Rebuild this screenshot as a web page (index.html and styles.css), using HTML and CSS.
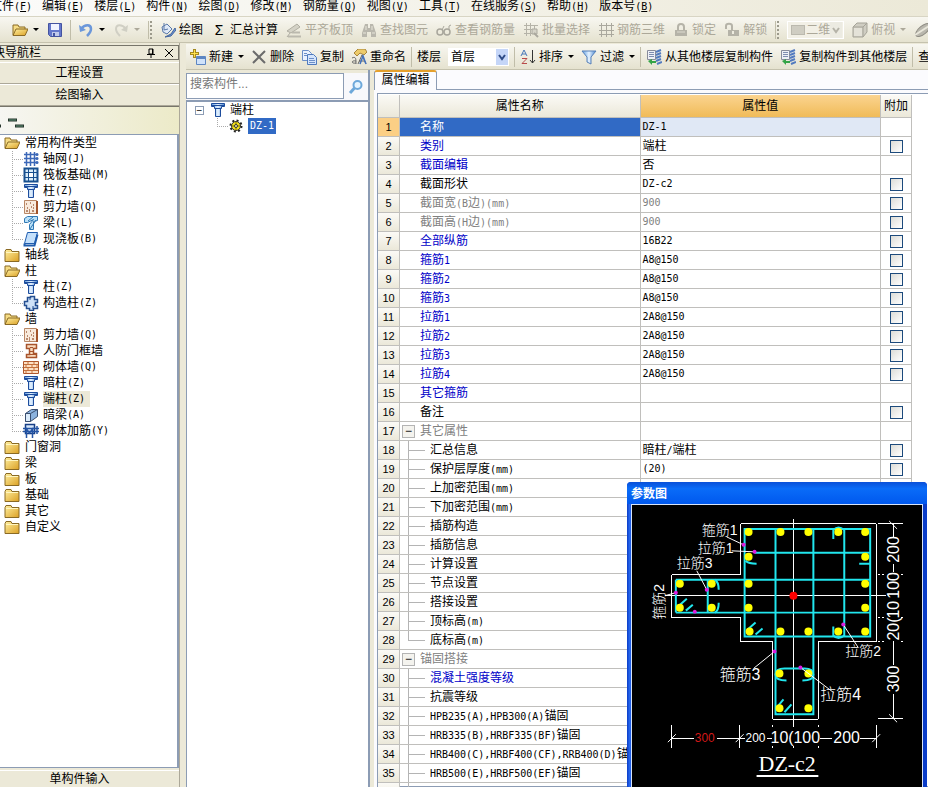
FILE: index.html
```html
<!doctype html>
<html lang="zh-CN">
  <head>
    <meta charset="utf-8" />
    <title>属性编辑</title>
    <link rel="stylesheet" href="styles.css">
  </head>
  <body>
    <svg class="sprite" aria-hidden="true">
      <defs>
        <linearGradient id="gold" x1="0" y1="0" x2="1" y2="1"><stop offset="0" stop-color="#fff0a0"/><stop offset="1" stop-color="#dba024"/></linearGradient>
        <linearGradient id="blue" x1="0" y1="0" x2="1" y2="0"><stop offset="0" stop-color="#5c9be0"/><stop offset=".5" stop-color="#e6f3ff"/><stop offset="1" stop-color="#4382d0"/></linearGradient>
      </defs>
      <symbol id="folder" viewBox="0 0 16 16"><path d="M1 4.500l1-2h5l1 2h7v10H1z" fill="url(#gold)" stroke="#8a6a24"/><path d="M2 5.500h12" stroke="#fff6c0"/></symbol>
      <symbol id="folder-open" viewBox="0 0 16 16"><path d="M1 13V3h5l1 2h6v3" fill="#f6dc84" stroke="#8a6a24"/><path d="M1 13.500L4 7h12l-3 6.500z" fill="url(#gold)" stroke="#8a6a24"/></symbol>
      <symbol id="grid" viewBox="0 0 16 16"><path d="M3.500 1v14M7.500 1v14M11.500 1v14M1 3.500h14M1 7.500h14M1 11.500h14" stroke="#3c68b8" fill="none" stroke-width="1.500"/><circle cx="14" cy="3.500" r="1.500" fill="#3c68b8"/><circle cx="14" cy="7.500" r="1.500" fill="#3c68b8"/><circle cx="14" cy="11.500" r="1.500" fill="#3c68b8"/></symbol>
      <symbol id="raft" viewBox="0 0 16 16"><path d="M1.500 1.500h13v13h-13z" fill="#d8ecfa" stroke="#174f8e" stroke-width="2"/><path d="M5.500 2v12M10.500 2v12M2 5.500h12M2 10.500h12" stroke="#174f8e"/><path d="M6 6h4v4H6z" fill="#fff"/></symbol>
      <symbol id="column" viewBox="0 0 16 16"><path d="M1.500 1.500h13v3h-3v2h-1v8h-5v-8h-1v-2h-3z" fill="url(#blue)" stroke="#1d4c9c"/><path d="M2 3.500h12M5 6.500h6" stroke="#1d4c9c"/></symbol>
      <symbol id="wall" viewBox="0 0 16 16"><path d="M1.500 1.500h12v13h-12z" fill="#f8eadc" stroke="#b98765"/><path d="M14 2v13" stroke="#a3542a" stroke-width="2"/><path d="M3 5h1m3-1h1m2 2h1M4 9h1m3-1h1M3 12h2m1-1h1m2 1h2m-1-3h1m-5 4h1" stroke="#a4694a" stroke-width="1.500"/></symbol>
      <symbol id="beam" viewBox="0 0 16 16"><path d="M1.500 3.500l3-2h10v4l-4 1v8h-4v-5l4-5-6 3h-3z" fill="#b9e0f8" stroke="#2f78b4"/><path d="M5 6l5-4M7 14l6-9" stroke="#2f78b4"/></symbol>
      <symbol id="slab" viewBox="0 0 16 16"><path d="M4.500 1.500h10l-3 11h-10z" fill="#c4e0fb" stroke="#1f5cae"/><path d="M1.500 12.500v2h10l3-11" fill="none" stroke="#1f5cae" stroke-width="2"/></symbol>
      <symbol id="tie-column" viewBox="0 0 16 16"><path d="M4.500 2.500h3v-1h4v3h3v3h-2v3h2v3h-4v2h-4v-2h-3v-3h-2v-4h3z" fill="#cfe2f8" stroke="#244f91" stroke-width="1.500"/><path d="M7 2v3m3 6v3" stroke="#244f91"/></symbol>
      <symbol id="door-wall" viewBox="0 0 16 16"><path d="M3.500 1.500h10v4h-3v5h3v4h-10v-3h3v-6h-3z" fill="#f9dcc0" stroke="#a8542c" stroke-width="1.500"/><path d="M7 4.500h3m-4 4h4m-3 3h6" stroke="#a8542c"/></symbol>
      <symbol id="brick" viewBox="0 0 16 16"><path d="M.5 2.500h15v12H.5z" fill="#fde0c4" stroke="#b0582c"/><path d="M1 5.500h14m-14 3h14m-14 3h14M5 3v2m6-2v2M3 6v2m6-2v2m5-2v2M5 9v2m6-2v2M3 12v2m6-2v2" stroke="#c4703c"/></symbol>
      <symbol id="hidden-beam" viewBox="0 0 16 16"><path d="M2.500 6.500l6-4h6v7l-7 5h-5z" fill="#8bb2de" stroke="#3a4f70"/><path d="M2.500 6.500h5v8h-5z" fill="#dcecfa" stroke="#3a4f70"/><path d="M7.500 6.500l7-4" stroke="#3a4f70"/></symbol>
      <symbol id="brick-rebar" viewBox="0 0 16 16"><path d="M2.500 1.500h9v9h-9z" fill="#d7e7fa" stroke="#173f86" stroke-width="1.500"/><path d="M0 5.500h16M0 8.500h16M3.500 15V6l3 4 3-4v9M14 3v8" stroke="#2454a4" fill="none" stroke-width="1.500"/></symbol>
      <symbol id="gear" viewBox="0 0 16 16"><circle cx="8" cy="8" r="5.500" fill="none" stroke="#222" stroke-width="2" stroke-dasharray="2 2.300"/><circle cx="8" cy="8" r="4.500" fill="#f2e01c" stroke="#333"/><path d="M8 4v8M4 8h8" stroke="#7c7200"/><circle cx="8" cy="8" r="1.500" fill="#fffbb0" stroke="#333"/></symbol>
      <symbol id="save" viewBox="0 0 16 16"><path d="M1.500 1.500h13v13h-11l-2-2z" fill="#6477cc" stroke="#4453a0"/><path d="M4 2h8v6H4z" fill="#f0f3ff"/><path d="M5 10h7v4H5z" fill="#c0c9ec"/><path d="M6 11h2v3H6z" fill="#4453a0"/></symbol>
      <symbol id="undo" viewBox="0 0 16 16"><path d="M3 7c4-5 10-5 10 0 0 3-2 5-4 7" fill="none" stroke="#6b97da" stroke-width="2.500"/><path d="M1 3l1 7 6-2z" fill="#6b97da"/></symbol>
      <symbol id="redo" viewBox="0 0 16 16"><path d="M13 7C9 2 3 2 3 7c0 3 2 5 4 7" fill="none" stroke="#d0cfc4" stroke-width="2"/><path d="M15 3l-1 7-6-2z" fill="#d0cfc4"/></symbol>
      <symbol id="draw" viewBox="0 0 16 16"><path d="M2 5l5-3 5 5-5 5-4-2z" fill="#dfe9f7" stroke="#5a78a8"/><path d="M4 1v7l4-1" fill="none" stroke="#5a78a8"/><path d="M15 6l-4 6-6 3 6-1 5-6z" fill="#6a95d8" stroke="#44649c"/></symbol>
      <symbol id="align" viewBox="0 0 16 16"><path d="M1 9l10-7 3 3-9 6z" fill="#d4d2c6" stroke="#b0aea2"/><path d="M6 9.500h8v2H6zm0 4h9v2H2v-2" fill="#bbb9ae"/><path d="M4 11l-3 4" stroke="#b0aea2"/></symbol>
      <symbol id="binoculars" viewBox="0 0 16 16"><path d="M4 2h3v4h2V2h3l3 9v4h-5v-5H6v5H1v-4z" fill="#b9b7ad"/><path d="M2 11h3m6 0h3M5 4v4m6-4v4" stroke="#e8e6da"/></symbol>
      <symbol id="glasses" viewBox="0 0 16 16"><circle cx="4" cy="10" r="3" fill="none" stroke="#a8a69c" stroke-width="1.500"/><circle cx="11" cy="10" r="3" fill="none" stroke="#a8a69c" stroke-width="1.500"/><path d="M7 10h1M13 8V4l2-1M6 8l2-4" stroke="#a8a69c" fill="none"/></symbol>
      <symbol id="batch" viewBox="0 0 16 16"><path d="M1 3.500h14M1 7.500h9M1 11.500h8M3.500 1v13M7.500 1v13M11.500 4v4" stroke="#b5b3a8"/><path d="M9 7h5v5H9z" fill="#d5d3c8" stroke="#aaa89e"/><path d="M11 11l4 4" stroke="#aaa89e" stroke-width="2"/></symbol>
      <symbol id="rebar3d" viewBox="0 0 16 16"><path d="M3.500 1v14M8.500 1v14M13.500 1v14M1 3.500h15M1 8.500h15M1 12.500h15" stroke="#aaa89e"/></symbol>
      <symbol id="lock" viewBox="0 0 16 16"><path d="M5 8V5c0-4 6-4 6 0v3" fill="none" stroke="#b5b3a8" stroke-width="2"/><path d="M2 8h12v6H2z" fill="#b5b3a8"/><path d="M4 10h8" stroke="#dddbd0"/></symbol>
      <symbol id="unlock" viewBox="0 0 16 16"><path d="M2 7V4c0-3 6-3 6 0v4" fill="none" stroke="#b5b3a8" stroke-width="2"/><path d="M4 8h11v6H4z" fill="#b5b3a8"/><path d="M9 9v3" stroke="#eeece0" stroke-width="2"/></symbol>
      <symbol id="cube" viewBox="0 0 16 16"><path d="M1 5l4-4h10v9l-4 5H1z" fill="#cfcdc2" stroke="#a5a398"/><path d="M1 5h10v10M11 5l4-4" fill="none" stroke="#a5a398"/><path d="M2 6h8v8H2z" fill="#e4e2d8"/></symbol>
      <symbol id="orbit" viewBox="0 0 16 16"><ellipse cx="9" cy="8" rx="9" ry="4" fill="#b9b7ad" stroke="#8f8d84" transform="rotate(-40 9 8)"/><path d="M1 13L15 4" stroke="#e8e6da" stroke-width="2"/></symbol>
      <symbol id="new" viewBox="0 0 16 16"><path d="M6.500 7.500h9v8h-9z" fill="#cfe2fa" stroke="#5d86c2"/><path d="M7 9h8" stroke="#5d86c2" stroke-width="2"/><path d="M4.500 0v9M0 4.500h9" stroke="#a48a20" stroke-width="3"/><path d="M4.500 1v7M1 4.500h7" stroke="#ffe14a"/></symbol>
      <symbol id="delete" viewBox="0 0 16 16"><path d="M2 2l12 12M14 2L2 14" stroke="#6b6b6b" stroke-width="2"/></symbol>
      <symbol id="copy" viewBox="0 0 16 16"><path d="M1.500 1.500h6l3 3v7h-9z" fill="#eaf2ff" stroke="#6c8fc8"/><path d="M6.500 5.500h6l3 3v7h-9z" fill="#d5e5fc" stroke="#4f7abd"/><path d="M8 9.500h5m-5 2h6m-6 2h6M3 4.500h3m-3 2h3" stroke="#6c8fc8"/></symbol>
      <symbol id="rename" viewBox="0 0 16 16"><path d="M3 4l4-4h7l2 3-3 3-4-2-3 3z" fill="#edcb6a" stroke="#a8853a"/><path d="M1 9c4-2 4 1 4 6M5 12c-5-1-5 3 0 2M7 15l4-9 4 9M8 12h6" fill="none" stroke="#666"/><path d="M9 15l3-8 3 8" fill="none" stroke="#4473be" stroke-width="1.500"/></symbol>
      <symbol id="sort" viewBox="0 0 16 16"><path d="M1 7l3-6 3 6M2 5h4" fill="none" stroke="#4878b8"/><path d="M2 9.500h5l-5 5h5" fill="none" stroke="#b84a4a"/><path d="M12.500 1v13M10 11l2.500 3 2.500-3" fill="none" stroke="#333"/></symbol>
      <symbol id="filter" viewBox="0 0 16 16"><path d="M1 2h14L10 8v7l-4-2V8z" fill="url(#blue)" stroke="#5680b8"/></symbol>
      <symbol id="floor-copy" viewBox="0 0 16 16"><path d="M1.500 1.500h8v9h-8z" fill="#eef0f6" stroke="#888c9c"/><path d="M3 3.500h5m-5 2h5m-5 2h5" stroke="#7f8db0"/><path d="M10 3l5-2M10 6l5-2M10 9l5-2M10 12l5-2M11 15l5-2" stroke="#527bc0" stroke-width="2"/><path d="M2 12l4-2v2h4v2H6v2z" fill="#35a447"/></symbol>
      <symbol id="search" viewBox="0 0 16 16"><circle cx="9.500" cy="6" r="4" fill="#e5f4ff" stroke="#6da8da" stroke-width="2"/><path d="M6.500 9L2 14" stroke="#6da8da" stroke-width="3"/></symbol>
      <symbol id="chevron" viewBox="0 0 12 16"><path d="M0 0h12v16H0z" fill="#c5d6f8"/><path d="M3 6l3 4 3-4" fill="none" stroke="#2c4a86" stroke-width="2"/></symbol>
      <symbol id="chevron-off" viewBox="0 0 12 16"><path d="M0 0h12v16H0z" fill="#ecebe2"/><path d="M3 6l3 4 3-4" fill="none" stroke="#b5b3a8" stroke-width="2"/></symbol>
    </svg>

    <nav class="menubar">
      <a href="#">文件<span class="en">(<u>F</u>)</span></a>
      <a href="#">编辑<span class="en">(<u>E</u>)</span></a>
      <a href="#">楼层<span class="en">(<u>L</u>)</span></a>
      <a href="#">构件<span class="en">(<u>N</u>)</span></a>
      <a href="#">绘图<span class="en">(<u>D</u>)</span></a>
      <a href="#">修改<span class="en">(<u>M</u>)</span></a>
      <a href="#">钢筋量<span class="en">(<u>Q</u>)</span></a>
      <a href="#">视图<span class="en">(<u>V</u>)</span></a>
      <a href="#">工具<span class="en">(<u>T</u>)</span></a>
      <a href="#">在线服务<span class="en">(<u>S</u>)</span></a>
      <a href="#">帮助<span class="en">(<u>H</u>)</span></a>
      <a href="#">版本号<span class="en">(<u>B</u>)</span></a>
    </nav>

    <div class="toolbar main-toolbar">
      <button aria-label="打开"><svg class="icon"><use href="#folder-open"/></svg><i class="caret"></i></button>
      <button aria-label="保存"><svg class="icon"><use href="#save"/></svg></button>
      <span class="sep"></span>
      <button aria-label="撤销"><svg class="icon"><use href="#undo"/></svg><i class="caret"></i></button>
      <button aria-label="恢复" disabled><svg class="icon"><use href="#redo"/></svg><i class="caret"></i></button>
      <span class="grip"></span>
      <button><svg class="icon"><use href="#draw"/></svg>绘图</button>
      <button><span class="sigma">Σ</span>汇总计算</button>
      <button disabled><svg class="icon"><use href="#align"/></svg>平齐板顶</button>
      <button disabled><svg class="icon"><use href="#binoculars"/></svg>查找图元</button>
      <button disabled><svg class="icon"><use href="#glasses"/></svg>查看钢筋量</button>
      <button disabled><svg class="icon"><use href="#batch"/></svg>批量选择</button>
      <button disabled><svg class="icon"><use href="#rebar3d"/></svg>钢筋三维</button>
      <button disabled><svg class="icon"><use href="#lock"/></svg>锁定</button>
      <button disabled><svg class="icon"><use href="#unlock"/></svg>解锁</button>
      <span class="grip"></span>
      <span class="combo off"><i class="swatch"></i><select aria-label="视图模式" disabled><option>二维</option></select><svg class="arrow"><use href="#chevron-off"/></svg></span>
      <button disabled><svg class="icon"><use href="#cube"/></svg>俯视<i class="caret"></i></button>
      <button aria-label="动态观察" disabled><svg class="icon"><use href="#orbit"/></svg></button>
    </div>

    <div class="workspace">
      <aside class="sidebar">
        <div class="side-title"><span class="side-name">模块导航栏</span>
          <button aria-label="固定"><svg class="pin" viewBox="0 0 10 10"><path d="M3 1h4v5H3zM1 6.500h8M5 7v3M6.500 1v5" fill="none" stroke="#000"/></svg></button>
          <button aria-label="关闭"><svg class="pin" viewBox="0 0 10 10"><path d="M1 1l8 8M9 1L1 9" stroke="#000"/></svg></button>
        </div>
        <button class="side-button">工程设置</button>
        <button class="side-button">绘图输入</button>
        <div class="side-tools"><svg class="dashes" viewBox="0 0 24 12"><path d="M8 3h9M15 9h9M0 9h1" stroke="#26352c" stroke-width="3"/><path d="M9 3h7M16 9h7" stroke="#5e9479"/></svg></div>
        <ul class="tree">
          <li><svg class="icon"><use href="#folder-open"/></svg><span>常用构件类型</span>
            <ul>
              <li><svg class="icon"><use href="#grid"/></svg><span>轴网<span class="en">(J)</span></span></li>
              <li><svg class="icon"><use href="#raft"/></svg><span>筏板基础<span class="en">(M)</span></span></li>
              <li><svg class="icon"><use href="#column"/></svg><span>柱<span class="en">(Z)</span></span></li>
              <li><svg class="icon"><use href="#wall"/></svg><span>剪力墙<span class="en">(Q)</span></span></li>
              <li><svg class="icon"><use href="#beam"/></svg><span>梁<span class="en">(L)</span></span></li>
              <li><svg class="icon"><use href="#slab"/></svg><span>现浇板<span class="en">(B)</span></span></li>
            </ul>
          </li>
          <li><svg class="icon"><use href="#folder"/></svg><span>轴线</span></li>
          <li><svg class="icon"><use href="#folder-open"/></svg><span>柱</span>
            <ul>
              <li><svg class="icon"><use href="#column"/></svg><span>柱<span class="en">(Z)</span></span></li>
              <li><svg class="icon"><use href="#tie-column"/></svg><span>构造柱<span class="en">(Z)</span></span></li>
            </ul>
          </li>
          <li><svg class="icon"><use href="#folder-open"/></svg><span>墙</span>
            <ul>
              <li><svg class="icon"><use href="#wall"/></svg><span>剪力墙<span class="en">(Q)</span></span></li>
              <li><svg class="icon"><use href="#door-wall"/></svg><span>人防门框墙</span></li>
              <li><svg class="icon"><use href="#brick"/></svg><span>砌体墙<span class="en">(Q)</span></span></li>
              <li><svg class="icon"><use href="#column"/></svg><span>暗柱<span class="en">(Z)</span></span></li>
              <li><svg class="icon"><use href="#column"/></svg><span class="current">端柱<span class="en">(Z)</span></span></li>
              <li><svg class="icon"><use href="#hidden-beam"/></svg><span>暗梁<span class="en">(A)</span></span></li>
              <li><svg class="icon"><use href="#brick-rebar"/></svg><span>砌体加筋<span class="en">(Y)</span></span></li>
            </ul>
          </li>
          <li><svg class="icon"><use href="#folder"/></svg><span>门窗洞</span></li>
          <li><svg class="icon"><use href="#folder"/></svg><span>梁</span></li>
          <li><svg class="icon"><use href="#folder"/></svg><span>板</span></li>
          <li><svg class="icon"><use href="#folder"/></svg><span>基础</span></li>
          <li><svg class="icon"><use href="#folder"/></svg><span>其它</span></li>
          <li><svg class="icon"><use href="#folder"/></svg><span>自定义</span></li>
        </ul>
        <button class="side-button last">单构件输入</button>
      </aside>

      <main class="editor">
        <div class="toolbar edit-toolbar">
          <button><svg class="icon"><use href="#new"/></svg>新建<i class="caret"></i></button>
          <button><svg class="icon"><use href="#delete"/></svg>删除</button>
          <button><svg class="icon"><use href="#copy"/></svg>复制</button>
          <button><svg class="icon"><use href="#rename"/></svg>重命名</button>
          <span class="sep"></span>
          <label for="floor">楼层</label>
          <span class="combo"><select id="floor"><option>首层</option></select><svg class="arrow"><use href="#chevron"/></svg></span>
          <span class="sep"></span>
          <button><svg class="icon"><use href="#sort"/></svg>排序<i class="caret"></i></button>
          <button><svg class="icon"><use href="#filter"/></svg>过滤<i class="caret"></i></button>
          <span class="sep"></span>
          <button><svg class="icon"><use href="#floor-copy"/></svg>从其他楼层复制构件</button>
          <button><svg class="icon"><use href="#floor-copy"/></svg>复制构件到其他楼层</button>
          <span class="sep"></span>
          <button>查找</button>
        </div>

        <div class="panes">
          <section class="parts">
            <div class="search">
              <input type="text" placeholder="搜索构件..." aria-label="搜索构件">
              <button aria-label="搜索"><svg class="icon"><use href="#search"/></svg></button>
            </div>
            <ul class="part-list">
              <li><button class="toggle" aria-label="折叠">−</button><svg class="icon"><use href="#column"/></svg><span>端柱</span></li>
              <li class="leaf"><svg class="icon"><use href="#gear"/></svg><span class="selected en">DZ-1</span></li>
            </ul>
          </section>

          <section class="props">
            <div class="tabs"><button class="tab">属性编辑</button></div>
            <div class="sheet">
              <table>
                <colgroup><col class="col-num"><col><col><col class="col-extra"></colgroup>
                <thead>
                  <tr><th></th><th>属性名称</th><th class="active">属性值</th><th>附加</th></tr>
                </thead>
                <tbody>
                  <tr class="picked"><th>1</th><td>名称</td><td class="en">DZ-1</td><td></td></tr>
                  <tr class="key"><th>2</th><td>类别</td><td>端柱</td><td><input type="checkbox" aria-label="类别"></td></tr>
                  <tr class="key"><th>3</th><td>截面编辑</td><td>否</td><td></td></tr>
                  <tr><th>4</th><td>截面形状</td><td class="en">DZ-c2</td><td><input type="checkbox" aria-label="截面形状"></td></tr>
                  <tr class="dim"><th>5</th><td>截面宽<span class="en">(B</span>边<span class="en">)(mm)</span></td><td class="en">900</td><td><input type="checkbox" aria-label="截面宽"></td></tr>
                  <tr class="dim"><th>6</th><td>截面高<span class="en">(H</span>边<span class="en">)(mm)</span></td><td class="en">900</td><td><input type="checkbox" aria-label="截面高"></td></tr>
                  <tr class="key"><th>7</th><td>全部纵筋</td><td class="en">16B22</td><td><input type="checkbox" aria-label="全部纵筋"></td></tr>
                  <tr class="key"><th>8</th><td>箍筋<span class="en">1</span></td><td class="en">A8@150</td><td><input type="checkbox" aria-label="箍筋1"></td></tr>
                  <tr class="key"><th>9</th><td>箍筋<span class="en">2</span></td><td class="en">A8@150</td><td><input type="checkbox" aria-label="箍筋2"></td></tr>
                  <tr class="key"><th>10</th><td>箍筋<span class="en">3</span></td><td class="en">A8@150</td><td><input type="checkbox" aria-label="箍筋3"></td></tr>
                  <tr class="key"><th>11</th><td>拉筋<span class="en">1</span></td><td class="en">2A8@150</td><td><input type="checkbox" aria-label="拉筋1"></td></tr>
                  <tr class="key"><th>12</th><td>拉筋<span class="en">2</span></td><td class="en">2A8@150</td><td><input type="checkbox" aria-label="拉筋2"></td></tr>
                  <tr class="key"><th>13</th><td>拉筋<span class="en">3</span></td><td class="en">2A8@150</td><td><input type="checkbox" aria-label="拉筋3"></td></tr>
                  <tr class="key"><th>14</th><td>拉筋<span class="en">4</span></td><td class="en">2A8@150</td><td><input type="checkbox" aria-label="拉筋4"></td></tr>
                  <tr class="key"><th>15</th><td>其它箍筋</td><td></td><td></td></tr>
                  <tr><th>16</th><td>备注</td><td></td><td><input type="checkbox" aria-label="备注"></td></tr>
                  <tr class="group"><th>17</th><td><button class="toggle" aria-label="折叠">−</button>其它属性</td><td></td><td></td></tr>
                  <tr class="child"><th>18</th><td>汇总信息</td><td>暗柱<span class="en">/</span>端柱</td><td><input type="checkbox" aria-label="汇总信息"></td></tr>
                  <tr class="child"><th>19</th><td>保护层厚度<span class="en">(mm)</span></td><td class="en">(20)</td><td><input type="checkbox" aria-label="保护层厚度"></td></tr>
                  <tr class="child"><th>20</th><td>上加密范围<span class="en">(mm)</span></td><td></td><td></td></tr>
                  <tr class="child"><th>21</th><td>下加密范围<span class="en">(mm)</span></td><td></td><td></td></tr>
                  <tr class="child"><th>22</th><td>插筋构造</td><td></td><td></td></tr>
                  <tr class="child"><th>23</th><td>插筋信息</td><td></td><td></td></tr>
                  <tr class="child"><th>24</th><td>计算设置</td><td></td><td></td></tr>
                  <tr class="child"><th>25</th><td>节点设置</td><td></td><td></td></tr>
                  <tr class="child"><th>26</th><td>搭接设置</td><td></td><td></td></tr>
                  <tr class="child"><th>27</th><td>顶标高<span class="en">(m)</span></td><td></td><td></td></tr>
                  <tr class="child end"><th>28</th><td>底标高<span class="en">(m)</span></td><td></td><td></td></tr>
                  <tr class="group"><th>29</th><td><button class="toggle" aria-label="折叠">−</button>锚固搭接</td><td></td><td></td></tr>
                  <tr class="child key"><th>30</th><td>混凝土强度等级</td><td></td><td></td></tr>
                  <tr class="child"><th>31</th><td>抗震等级</td><td></td><td></td></tr>
                  <tr class="child"><th>32</th><td><span class="en">HPB235(A),HPB300(A)</span>锚固</td><td></td><td></td></tr>
                  <tr class="child"><th>33</th><td><span class="en">HRB335(B),HRBF335(BF)</span>锚固</td><td></td><td></td></tr>
                  <tr class="child"><th>34</th><td><span class="en">HRB400(C),HRBF400(CF),RRB400(D)</span>锚固</td><td></td><td></td></tr>
                  <tr class="child"><th>35</th><td><span class="en">HRB500(E),HRBF500(EF)</span>锚固</td><td></td><td></td></tr>
                  <tr class="child"><th></th><td></td><td></td><td></td></tr>
                </tbody>
              </table>
            </div>
          </section>
        </div>
      </main>
    </div>

    <div class="param-window">
      <h2>参数图</h2>
      <svg class="drawing" viewBox="3 24 291 283" role="img" aria-label="DZ-c2">
        <g fill="none" stroke="#fff" shape-rendering="crispEdges">
          <path d="M112 43H248V161H190V239H144V161H112V137H43V94H112Z"/>
          <path d="M165 38V247M36 115H258"/>
          <path d="M43 245V268M111 245V268M248 245V268M43 258H65M88 258H116M138 258H143M192 258H204M232 258H248"/>
          <path d="M250 43H275M250 238H275M265 43V56M265 83V91M265 160V185M265 214V238"/>
          <path d="M250 94H256M250 137H256M250 161H256M273 94H275M273 137H275M273 161H275M144 245V248M144 266V268M165 245V248M165 266V268M190 245V248M190 266V268" stroke-dasharray="2 2"/>
        </g>
        <path d="M39 262l8-8M107 262l8-8M244 262l8-8M261 40l8 8M261 234l8 8" stroke="#fff"/>
        <g fill="none" stroke="#21e6ee" stroke-width="2">
          <path d="M116 48H242V156H116ZM147 48V234H185V48M216 48V156M126 72H242M47 99H242M47 132H242M47 99V132M79 99V132"/>
          <path d="M205 58V49q5-5 11 0M205 146v9q5 5 11 0M117 80q3 3 11 3M242 83h-11M86 99q4 2 4 10M86 132q4-2 4-10"/>
          <path d="M50 125l8-7M57 130l7-6M119 149l8-7M127 154l7-6M150 225l5-6M156 232l7-8"/>
          <path d="M158 200q-11 0-11-6t9-6h20q9 0 9 6t-11 6"/>
        </g>
        <g fill="#ff0">
          <circle cx="120" cy="51" r="4"/><circle cx="152" cy="51" r="4"/><circle cx="180" cy="51" r="4"/><circle cx="210" cy="51" r="4"/><circle cx="237" cy="51" r="4"/>
          <circle cx="120" cy="76" r="4"/><circle cx="237" cy="76" r="4"/>
          <circle cx="51" cy="103" r="4"/><circle cx="83" cy="103" r="4"/><circle cx="120" cy="103" r="4"/><circle cx="237" cy="103" r="4"/>
          <circle cx="51" cy="127" r="4"/><circle cx="83" cy="127" r="4"/><circle cx="120" cy="127" r="4"/><circle cx="237" cy="127" r="4"/>
          <circle cx="121" cy="151" r="4"/><circle cx="152" cy="151" r="4"/><circle cx="180" cy="151" r="4"/><circle cx="210" cy="151" r="4"/><circle cx="237" cy="151" r="4"/>
          <circle cx="151" cy="193" r="4"/><circle cx="180" cy="193" r="4"/><circle cx="151" cy="228" r="4"/><circle cx="180" cy="228" r="4"/>
        </g>
        <circle cx="165" cy="115" r="4" fill="#f00"/>
        <path d="M98 56l17 8M103 70l23 1M68 90l10 19M36 115l11-3M215 144l15 23M125 188l21-17M172 187l33 25" stroke="#fff"/>
        <g fill="#e01ee0">
          <circle cx="115" cy="64" r="2"/><circle cx="126" cy="71" r="2"/><circle cx="78" cy="109" r="2"/><circle cx="47" cy="112" r="2"/>
          <circle cx="66" cy="131" r="2"/><circle cx="215" cy="144" r="2"/><circle cx="146" cy="171" r="2"/><circle cx="172" cy="187" r="2"/>
        </g>
        <g class="label">
          <text x="73" y="54">箍筋1</text>
          <text x="69" y="72">拉筋1</text>
          <text x="48" y="87">拉筋3</text>
          <text x="217" y="176">拉筋2</text>
          <text transform="translate(35 139) rotate(-90)">箍筋2</text>
          <text class="big" x="91" y="200">箍筋3</text>
          <text class="big" x="192" y="220">拉筋4</text>
        </g>
        <g class="measure">
          <text class="small red" x="66" y="262">300</text>
          <text class="small" x="117" y="262">200</text>
          <text x="142" y="263">10(</text>
          <text x="165" y="263">100</text>
          <text x="205" y="263">200</text>
          <text transform="translate(271 212) rotate(-90)">300</text>
          <text transform="translate(271 160) rotate(-90)">20(</text>
          <text transform="translate(271 138) rotate(-90)">10</text>
          <text transform="translate(271 118) rotate(-90)">100</text>
          <text transform="translate(271 82) rotate(-90)">200</text>
        </g>
        <text class="caption" x="130" y="291">DZ-c2</text>
        <path d="M128 296H190" stroke="#fff" stroke-width="2"/>
      </svg>
    </div>
  </body>
</html>
```
FILE: styles.css
```css
*
{
    box-sizing: border-box;
}

body
{
    --line: #8c9cb4;
    --face: #ece9d8;
    margin: 0;
    height: 100vh;
    overflow: hidden;
    display: flex;
    flex-direction: column;
    position: relative;
    background: var(--face);
    font: 12px/16px "Liberation Sans", "Noto Sans CJK SC", sans-serif;
    color: #000;
}

button,
input,
select
{
    font: inherit;
    color: inherit;
    margin: 0;
    padding: 0;
    border: 0;
    background: none;
}

ul
{
    list-style: none;
    margin: 0;
    padding: 0;
}

/* kept rendered so that the gradients still resolve */
.sprite
{
    position: absolute;
    width: 0;
    height: 0;
}

.icon
{
    width: 16px;
    height: 16px;
    flex: none;
}

/* half-width latin next to the full-width characters */
.en
{
    font-family: "DejaVu Sans Mono", monospace;
    font-size: 10px;
}

.menubar
{
    display: flex;
    flex: none;
    gap: 10px;
    height: 16px;
    margin-left: -10px;
    line-height: 12px;
    white-space: nowrap;
    background: linear-gradient(to right, #fbfbfa, #ece9d8);
}

.menubar a
{
    color: inherit;
    text-decoration: none;
}

.toolbar
{
    display: flex;
    flex: none;
    align-items: center;
    white-space: nowrap;
    overflow: hidden;
    background: linear-gradient(#f8f7f1, #e5e2cf);
    border-bottom: 1px solid #c5c2ae;
}

.toolbar button
{
    display: flex;
    flex: none;
    align-items: center;
    gap: 3px;
}

.toolbar button:disabled
{
    color: #aca899;
}

.main-toolbar
{
    gap: 8px;
    height: 27px;
    padding-left: 12px;
    border-top: 1px solid #d8d5c4;
}

.edit-toolbar
{
    gap: 7px;
    height: 26px;
    padding-left: 4px;
}

.caret
{
    border: 3px solid transparent;
    border-top-color: currentColor;
    border-bottom: 0;
    margin-left: 2px;
}

.sep
{
    flex: none;
    width: 1px;
    height: 20px;
    background: #c0bda9;
    margin: 0 -2px;
}

.main-toolbar .sep
{
    margin: 0 -1px;
}

.grip
{
    flex: none;
    width: 4px;
    height: 18px;
    border-left: 1px solid #c0bda9;
    border-right: 2px dotted #9c9a8c;
}

.sigma
{
    width: 16px;
    text-align: center;
    font-size: 14px;
}

.combo
{
    display: flex;
    flex: none;
    align-items: center;
    width: 61px;
    height: 18px;
    padding: 1px 1px 1px 3px;
    background: #fff;
}

.combo select
{
    appearance: none;
    flex: 1;
    min-width: 0;
    height: 16px;
    line-height: 16px;
}

.combo.off
{
    width: 57px;
    background: #f2f0e6;
    border: 1px solid #fff;
    color: #aca899;
}

.combo.off select
{
    opacity: 1;
}

.swatch
{
    width: 14px;
    height: 10px;
    background: #cfcdc2;
    border: 1px solid #bbb9ae;
    margin-right: 1px;
}

.arrow
{
    width: 12px;
    height: 16px;
}

.workspace
{
    display: flex;
    flex: 1;
    min-height: 0;
}

.sidebar
{
    display: flex;
    flex: none;
    flex-direction: column;
    width: 180px;
    margin-right: 6px;
    padding-top: 2px;
    border-right: 1px solid #aca899;
}

.side-title
{
    display: flex;
    flex: none;
    align-items: center;
    gap: 8px;
    height: 15px;
    margin-bottom: 2px;
    padding-right: 4px;
    border: 1px solid #77756a;
    border-left: 0;
    white-space: nowrap;
}

.side-name
{
    flex: 1;
    margin-left: -19px;
}

.side-title button
{
    display: flex;
}

.pin
{
    width: 10px;
    height: 10px;
}

.side-button
{
    flex: none;
    height: 22px;
    padding-right: 20px;
    background: var(--face);
    border-top: 1px solid #fff;
    border-bottom: 1px solid #aca899;
}

.side-button.last
{
    height: 17px;
    margin-top: 2px;
    border-bottom: 0;
    overflow: hidden;
}

.side-tools
{
    flex: none;
    height: 28px;
    padding-top: 10px;
    background: linear-gradient(to right, #f6f6f2, #eceac8);
    border-top: 1px solid #77756a;
}

.dashes
{
    display: block;
    width: 24px;
    height: 12px;
}

.tree
{
    flex: 1;
    min-height: 0;
    overflow: hidden;
    padding-left: 4px;
    background: #fff;
    border: 1px solid var(--line);
    border-left: 0;
    border-right: 2px solid var(--line);
}

.tree .icon
{
    float: left;
    margin-right: 5px;
}

.tree li span
{
    display: inline-block;
    height: 16px;
    vertical-align: top;
}

.tree ul
{
    margin-left: 8px;
    background: repeating-linear-gradient(#aaa 0 1px, #fff 1px 2px) 0 0 / 1px 100% no-repeat;
}

.tree ul li
{
    height: 16px;
    padding-left: 11px;
    background: repeating-linear-gradient(to right, #aaa 0 1px, #fff 1px 2px) 0 8px / 11px 1px no-repeat;
}

.tree ul li:last-child
{
    background: repeating-linear-gradient(to right, #aaa 0 1px, #fff 1px 2px) 0 8px / 11px 1px no-repeat, linear-gradient(#fff, #fff) 0 9px / 1px 7px no-repeat;
}

.tree ul .icon
{
    margin-right: 4px;
}

.tree .current
{
    background: var(--face);
    padding-right: 5px;
}

.editor
{
    display: flex;
    flex: 1;
    flex-direction: column;
    min-width: 0;
    padding-top: 1px;
}

.panes
{
    display: flex;
    flex: 1;
    min-height: 0;
}

.parts
{
    display: flex;
    flex: none;
    flex-direction: column;
    width: 184px;
    padding-top: 3px;
    border-right: 2px solid var(--line);
}

.search
{
    display: flex;
    flex: none;
    height: 28px;
    background: #f8f8fb;
    border-bottom: 1px solid var(--line);
}

.search input
{
    width: 158px;
    height: 26px;
    padding: 0 3px 5px;
    background: #fff;
    border: 1px solid var(--line);
}

.search input::placeholder
{
    color: #777;
}

.search button
{
    flex: 1;
    display: flex;
    align-items: center;
    justify-content: center;
}

.part-list
{
    flex: 1;
    padding-left: 8px;
    background: #fff;
    border-left: 1px solid var(--line);
    border-top: 1px solid var(--line);
}

.part-list li
{
    display: flex;
    align-items: center;
    height: 16px;
}

.part-list .icon
{
    margin: 0 4px 0 6px;
}

.part-list .toggle
{
    width: 9px;
    height: 9px;
    line-height: 7px;
    font-size: 10px;
    border: 1px solid #8c9cb4;
}

.part-list .leaf
{
    padding-left: 23px;
    background: repeating-linear-gradient(to right, #aaa 0 1px, #fff 1px 2px) 22px 8px / 11px 1px no-repeat, repeating-linear-gradient(#aaa 0 1px, #fff 1px 2px) 22px 0 / 1px 8px no-repeat;
}

.part-list .leaf .icon
{
    margin-left: 10px;
}

.selected
{
    background: #316ac5;
    color: #fff;
    padding: 0 2px;
}

.props
{
    flex: 1;
    display: flex;
    flex-direction: column;
    min-width: 0;
    margin-left: 4px;
    background: #fbfbfe;
    overflow: hidden;
}

.tabs
{
    flex: none;
    height: 20px;
    border-bottom: 1px solid var(--line);
}

.tab
{
    display: block;
    width: 63px;
    height: 20px;
    padding-bottom: 2px;
    background: #fbfbfe;
    border: 1px solid var(--line);
    border-top: 2px solid #e5a02c;
    border-bottom: 0;
    border-radius: 3px 3px 0 0;
}

.sheet
{
    flex: 1;
    min-height: 0;
    margin: 3px 0 0 3px;
    padding: 1px 16px 0 0;
    background: #fff;
    border: 1px solid var(--line);
    border-right: 0;
}

.sheet table
{
    width: 100%;
    table-layout: fixed;
    border-collapse: separate;
    border-spacing: 0;
}

.col-num
{
    width: 22px;
}

.col-extra
{
    width: 31px;
}

.sheet th,
.sheet td
{
    height: 19px;
    padding: 0;
    font-weight: normal;
    white-space: nowrap;
    overflow: hidden;
    border-right: 1px solid #c0bfbc;
    border-bottom: 1px solid #c0bfbc;
}

.sheet th
{
    background: linear-gradient(#fbfaf6, #ebe8d9);
}

.sheet thead th
{
    height: 23px;
}

.sheet thead .active
{
    background: linear-gradient(#fbd490, #f0bb58);
}

.sheet tbody th
{
    font-size: 11px;
}

.sheet td:nth-child(2)
{
    padding-left: 20px;
}

.sheet td:nth-child(3)
{
    padding-left: 2px;
}

.sheet td:last-child
{
    text-align: center;
}

.sheet .picked th
{
    background: #fbcf85;
}

.sheet .picked td:nth-child(2)
{
    background: #316ac5;
    color: #fff;
}

.sheet .picked td:nth-child(3)
{
    background: #e0e8f5;
}

.key td:nth-child(2)
{
    color: #0000c8;
}

.dim td,
.group td
{
    color: #808080;
}

.sheet .group td:nth-child(2)
{
    padding-left: 2px;
}

.group .toggle
{
    width: 13px;
    height: 13px;
    margin-right: 5px;
    line-height: 11px;
    vertical-align: middle;
    color: #000;
    background: #f4f3ee;
    border: 1px solid #b4b4b4;
}

.sheet .child td:nth-child(2)
{
    padding-left: 30px;
    background: linear-gradient(#b4b4b4, #b4b4b4) 8px 0 / 1px 100% no-repeat, linear-gradient(#b4b4b4, #b4b4b4) 8px 9px / 17px 1px no-repeat;
}

.sheet .end td:nth-child(2)
{
    background-size: 1px 9px, 17px 1px;
}

.sheet input
{
    appearance: none;
    display: block;
    width: 13px;
    height: 13px;
    margin: 0 auto;
    background: linear-gradient(135deg, #dcdcd7, #fff);
    border: 1px solid #1c4a7c;
}

/* floating section drawing */
.param-window
{
    position: absolute;
    right: 1px;
    bottom: 0;
    width: 300px;
    padding: 0 4px;
    background: linear-gradient(to right, #0a3cc8, #2a6cf0 3px, #0a3cc8 5px, #0a3cc8);
    border-radius: 4px 4px 0 0;
    overflow: hidden;
}

.param-window h2
{
    margin: 0 -4px;
    padding: 4px 4px 2px;
    height: 22px;
    font-size: 12px;
    line-height: 16px;
    color: #fff;
    background: linear-gradient(#0a50d8, #0a6cf8 30%, #0058ee);
}

.drawing
{
    display: block;
    width: 100%;
    background: #000;
    border: 1px solid #d8e4f8;
    border-bottom: 0;
}

.label,
.measure
{
    fill: #fff;
    font-size: 14px;
}

.label
{
    font-family: "Liberation Sans", "Noto Sans CJK SC", sans-serif;
    font-weight: 300;
}

.label .big,
.measure
{
    font-size: 16px;
}

.measure .small
{
    font-size: 12px;
}

.measure .red
{
    fill: #d01818;
}

.caption
{
    fill: #fff;
    font: 22px "Liberation Serif", serif;
}
```
